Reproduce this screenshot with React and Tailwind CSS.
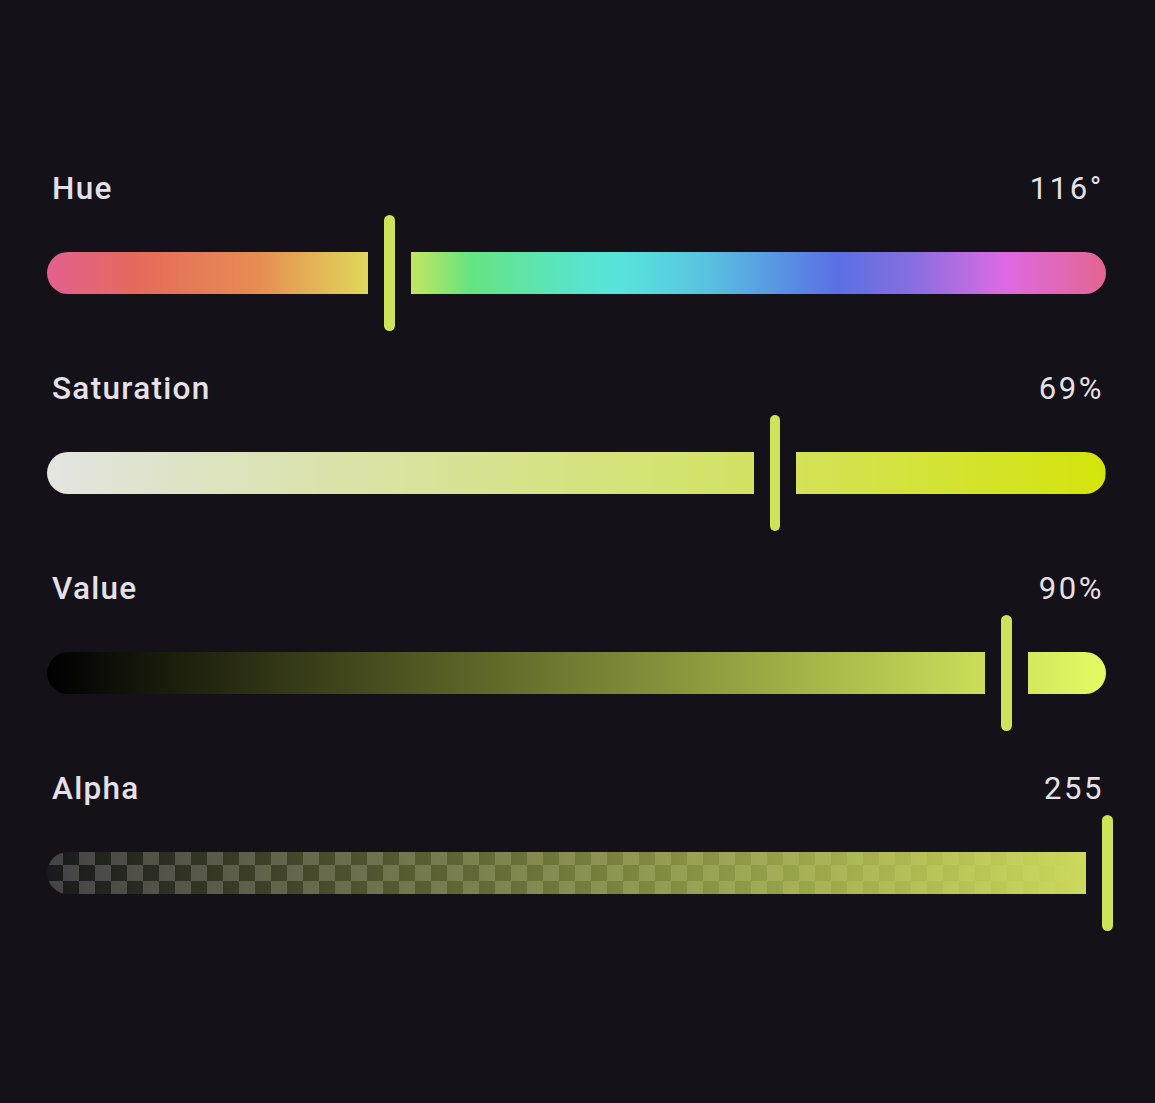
import React from "react";

// full width of a track, thumb geometry and the gap around the thumb
const TRACK_W = 1059;
const THUMB_W = 10.4;
const GAP = 16;

const sliders = [
  {
    label: "Hue",
    value: "116°",
    frac: 116 / 360,
    bg: "bg-[linear-gradient(90deg,#e3608f_0%,#e56a5b_8.5%,#e68d52_20%,#e0d65a_30%,#c0e660_34.5%,#64e480_40%,#5ae4c4_49%,#58e4dc_54%,#58c4e0_62%,#5a70e4_74.5%,#8a6ee0_82%,#de6ae2_90.5%,#e36590_100%)] [background-size:1059px_100%] bg-no-repeat",
  },
  {
    label: "Saturation",
    value: "69%",
    frac: 0.6864,
    bg: "bg-[linear-gradient(90deg,#e4e4e2_0%,#dde3c0_15%,#d3e262_67%,#d4e40a_100%)] [background-size:1059px_100%] bg-no-repeat",
  },
  {
    label: "Value",
    value: "90%",
    frac: 0.9046,
    bg: "bg-[linear-gradient(90deg,#000000_0%,#e6fa64_100%)] [background-size:1059px_100%] bg-no-repeat",
  },
  {
    label: "Alpha",
    value: "255",
    frac: 1,
    bg: "[background-image:linear-gradient(90deg,rgba(206,220,92,0)_0%,rgba(206,220,92,1)_100%),repeating-conic-gradient(#19191b_0_25%,#444346_0_50%)] [background-size:1059px_100%,32px_32px] [background-position:0_0,0_-3px]",
  },
];

function Slider({ frac, bg }) {
  const thumbLeft = 1 + frac * 1059.5 - THUMB_W / 2;
  const leftW = thumbLeft - GAP;
  const rightStart = thumbLeft + THUMB_W + GAP;
  const rightW = TRACK_W - rightStart;

  return (
    <div className="flex h-[116px] w-[1059px] items-center">
      <div
        className={`h-[42px] shrink-0 rounded-l-full rounded-r-[5px] ${bg}`}
        style={{ width: leftW }}
      />
      <div className="mx-[16px] h-[116px] w-[10.4px] shrink-0 rounded-full bg-[#cfe35a]" />
      {rightW > 0 && (
        <div
          className={`h-[42px] min-w-0 flex-1 rounded-l-[5px] rounded-r-full ${bg}`}
          style={{ backgroundPosition: `-${rightStart}px 0` }}
        />
      )}
    </div>
  );
}

export default function App() {
  return (
    <div className="min-h-screen w-full bg-[#141218] font-[Roboto,sans-serif] text-[#e6e0e9]">
      <div className="flex flex-col gap-[38px] pl-[47px] pt-[169px]">
        {sliders.map((s) => (
          <div key={s.label} className="flex w-[1059px] flex-col">
            <div className="flex h-[40px] items-center justify-between leading-[40px]">
              <span className="pl-[5px] text-[31.5px] font-medium tracking-[1.3px]">
                {s.label}
              </span>
              <span className="pr-[2px] text-[31px] tracking-[2.6px]">
                {s.value}
              </span>
            </div>
            <div className="mt-[6px]">
              <Slider frac={s.frac} bg={s.bg} />
            </div>
          </div>
        ))}
      </div>
    </div>
  );
}
